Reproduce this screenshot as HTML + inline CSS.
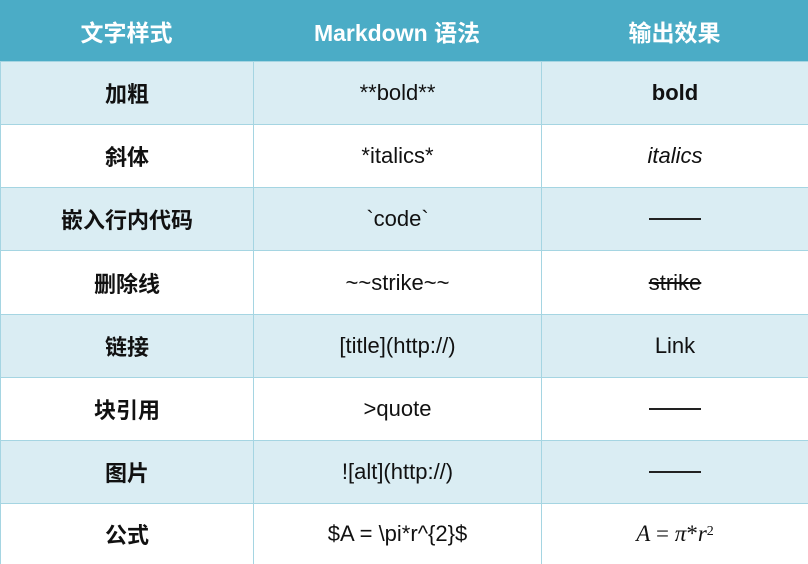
<!DOCTYPE html>
<html><head><meta charset="utf-8"><style>
body{margin:0;width:808px;height:564px;overflow:hidden;background:#fff;font-family:"Liberation Sans","Noto Sans CJK SC",sans-serif;}
.r{position:absolute;left:0;width:808px;display:flex;border-top:1px solid #a5d5e2;box-sizing:border-box;border-left:1px solid #a5d5e2;}
.c{display:flex;align-items:center;justify-content:center;font-size:22px;color:#111;box-sizing:border-box;}
.c1{width:252px;font-weight:bold;}
.c2{width:288px;border-left:1px solid #a5d5e2;}
.c3{width:267px;border-left:1px solid #a5d5e2;}
.h{background:#4bacc6;border:none;}
.h .c{color:#fff;font-weight:bold;border:none;font-size:23px;}
.h .c1{width:253px}
.a{background:#daedf3;}
.d{display:inline-block;width:52px;height:2px;background:#222;}
</style></head><body>
<div class="r h" style="top:0;height:61px"><div class="c c1">文字样式</div><div class="c c2">Markdown 语法</div><div class="c c3">输出效果</div></div>
<div class="r a" style="top:61px;height:63px"><div class="c c1">加粗</div><div class="c c2">**bold**</div><div class="c c3"><b>bold</b></div></div>
<div class="r" style="top:124px;height:63px"><div class="c c1">斜体</div><div class="c c2">*italics*</div><div class="c c3"><i>italics</i></div></div>
<div class="r a" style="top:187px;height:63px"><div class="c c1">嵌入行内代码</div><div class="c c2">`code`</div><div class="c c3"><span class="d"></span></div></div>
<div class="r" style="top:250px;height:64px"><div class="c c1">删除线</div><div class="c c2">~~strike~~</div><div class="c c3"><s>strike</s></div></div>
<div class="r a" style="top:314px;height:63px"><div class="c c1">链接</div><div class="c c2">[title](http://)</div><div class="c c3">Link</div></div>
<div class="r" style="top:377px;height:63px"><div class="c c1">块引用</div><div class="c c2">&gt;quote</div><div class="c c3"><span class="d"></span></div></div>
<div class="r a" style="top:440px;height:63px"><div class="c c1">图片</div><div class="c c2">![alt](http://)</div><div class="c c3"><span class="d"></span></div></div>
<div class="r" style="top:503px;height:61px"><div class="c c1">公式</div><div class="c c2">$A = \pi*r^{2}$</div><div class="c c3" style="font-family:'Liberation Serif',serif;font-style:italic;font-size:23px">A<span style="font-style:normal">&nbsp;=&nbsp;</span>π<span style="font-style:normal">*</span>r<sup style="font-size:14px;font-style:normal;position:relative;top:-2px">2</sup></div></div>
</body></html>
